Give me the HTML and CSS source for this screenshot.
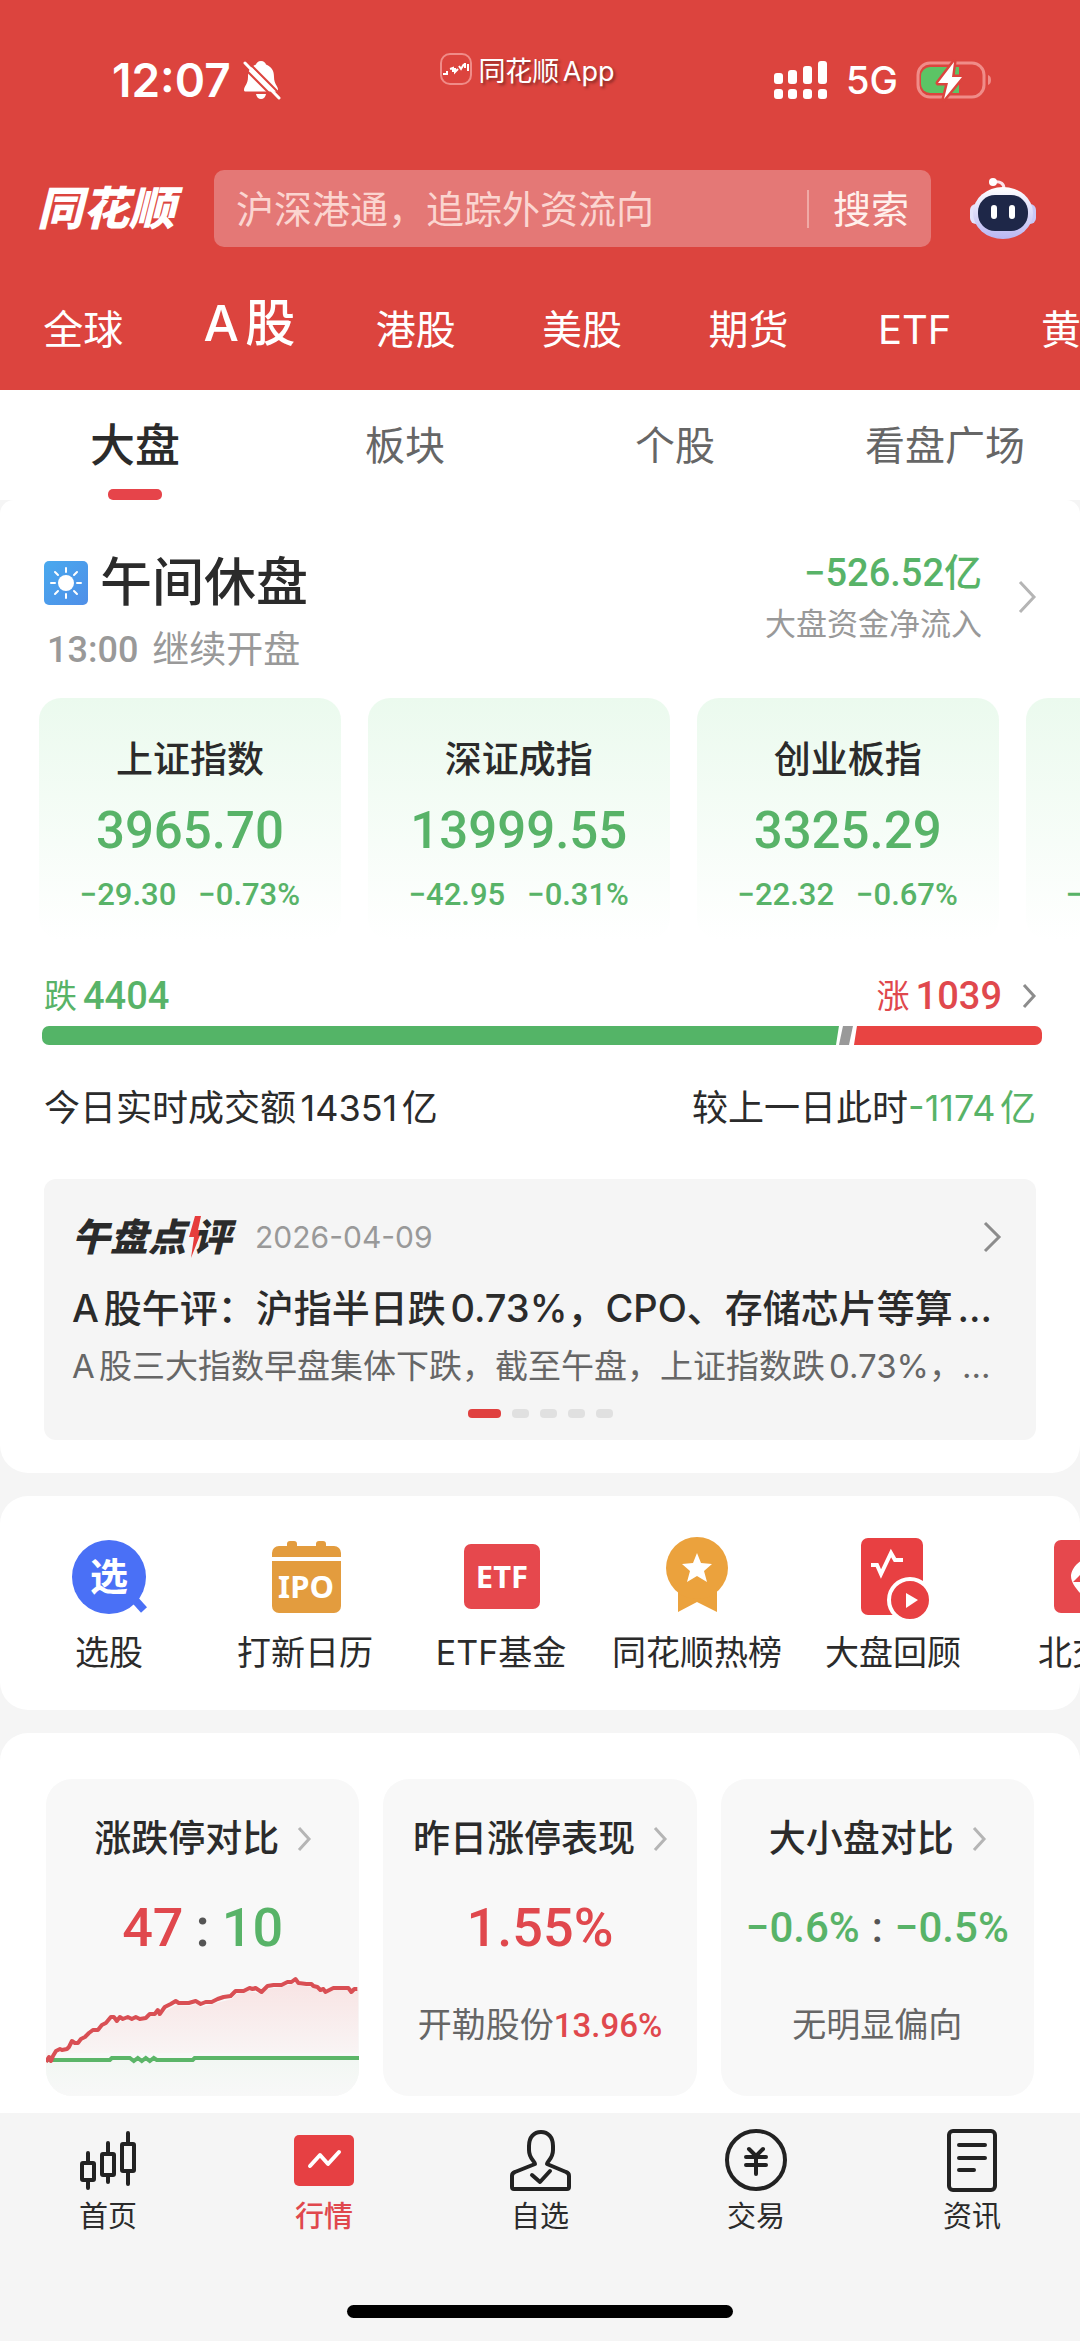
FILE: index.html
```html
<!DOCTYPE html>
<html lang="zh-CN">
<head>
    <meta charset="UTF-8">
    <meta name="viewport" content="width=device-width, initial-scale=1.0">
    <title>同花顺</title>
    <link rel="stylesheet" href="styles.css">
</head>
<body>
<header class="header">
    <div class="status">
        <div class="status-left">
            <span class="time">12:07</span>
            <svg class="bell" viewBox="0 0 38 40" aria-hidden="true">
                <path d="M18 1c-3 0-4.500 2-5 3.500C7 7 5 11 5 17c0 7-4 9-4 13 0 1 .6 1.500 2 1.500h30c1.400 0 2-.5 2-1.500 0-4-4-6-4-13 0-6-2-10-8-12.500C22.500 3 21 1 18 1z" fill="#fff"/>
                <path d="M13 34h10c-.5 3-2.500 5-5 5s-4.500-2-5-5z" fill="#fff"/>
                <path d="M-1 6l35 35" stroke="#dc443e" stroke-width="2"/>
                <path d="M3 0l36 36" stroke="#dc443e" stroke-width="2"/>
                <path d="M2 3l34 35" stroke="#fff" stroke-width="3" stroke-linecap="round"/>
            </svg>
        </div>
        <div class="status-app">
            <svg class="app-icon" viewBox="0 0 32 32" aria-hidden="true">
                <rect x="1" y="1" width="30" height="30" rx="9" fill="none" stroke="#f08c88" stroke-width="2"/>
                <path d="M3 21h4v-3M10 16l3-1v4M15 15v4l3-3M19 13l2 3 3-5M25 10v5M28 11v7" fill="none" stroke="#fff" stroke-width="2"/>
            </svg>
            <span>同花顺App</span>
        </div>
        <div class="status-right">
            <svg class="signal" viewBox="0 0 54 40" fill="#fff" aria-hidden="true">
                <rect x="0" y="13" width="9" height="11" rx="3"/>
                <rect x="14" y="10" width="9" height="14" rx="3"/>
                <rect x="29" y="6" width="9" height="18" rx="3"/>
                <rect x="44" y="1" width="9" height="23" rx="3"/>
                <rect x="0" y="29" width="9" height="10" rx="3"/>
                <rect x="14" y="29" width="9" height="10" rx="3"/>
                <rect x="29" y="29" width="9" height="10" rx="3"/>
                <rect x="44" y="29" width="9" height="10" rx="3"/>
            </svg>
            <span class="net">5G</span>
            <svg class="battery" viewBox="0 0 76 38" aria-hidden="true">
                <rect x="2" y="2" width="66" height="34" rx="12" fill="none" stroke="#f08c88" stroke-width="3"/>
                <path d="M72 14c4 1 4 9 0 10z" fill="#f08c88"/>
                <path d="M14 6h29v26H14a9 9 0 0 1-9-9v-8a9 9 0 0 1 9-9z" fill="#5cc465"/>
                <path d="M38 1L22 22h10l-4 16 18-22H36z" fill="#fff" stroke="#dc443e" stroke-width="5" paint-order="stroke" stroke-linejoin="round"/>
            </svg>
        </div>
    </div>

    <div class="search-row">
        <h1 class="logo">同花顺</h1>
        <form class="search">
            <input class="search-input" type="text" aria-label="搜索" placeholder="沪深港通，追踪外资流向">
            <button class="search-btn" type="button">搜索</button>
        </form>
        <button class="robot" type="button" aria-label="助手">
            <svg viewBox="0 0 66 64" aria-hidden="true">
                <defs>
                    <linearGradient id="shell" x1="0" y1="0" x2="0" y2="1">
                        <stop offset="0" stop-color="#fff"/>
                        <stop offset="1" stop-color="#b9b6f2"/>
                    </linearGradient>
                </defs>
                <path d="M24 5c7-1 10 2 10 7" fill="none" stroke="#fbe3ea" stroke-width="3"/>
                <circle cx="23" cy="5" r="4" fill="#fff"/>
                <rect x="0" y="27" width="12" height="20" rx="6" fill="#e4e3fb"/>
                <rect x="54" y="27" width="12" height="20" rx="6" fill="#c9c9f6"/>
                <ellipse cx="33" cy="36" rx="30" ry="26" fill="url(#shell)"/>
                <rect x="8" y="18" width="50" height="36" rx="17" fill="#1e2748"/>
                <path d="M24 31v8M42 31v8" stroke="#fff" stroke-width="6" stroke-linecap="round"/>
            </svg>
        </button>
    </div>

    <nav class="markets">
        <a href="#">全球</a>
        <a href="#" class="active">A股</a>
        <a href="#">港股</a>
        <a href="#">美股</a>
        <a href="#">期货</a>
        <a href="#">ETF</a>
        <a href="#">黄金</a>
    </nav>
</header>

<nav class="subnav">
    <a href="#" class="active">大盘</a>
    <a href="#">板块</a>
    <a href="#">个股</a>
    <a href="#">看盘广场</a>
</nav>

<main class="main">
    <section class="panel overview">
        <div class="session">
            <div>
                <h2 class="session-title">
                    <svg class="sun" viewBox="0 0 44 44" aria-hidden="true">
                        <defs>
                            <linearGradient id="sky" x1="0" y1="0" x2="1" y2="1">
                                <stop offset="0" stop-color="#49a9ee"/>
                                <stop offset="1" stop-color="#4f8fe8"/>
                            </linearGradient>
                        </defs>
                        <rect width="44" height="44" rx="5" fill="url(#sky)"/>
                        <circle cx="22" cy="22" r="8" fill="#fff"/>
                        <path d="M22 7v4M22 33v4M7 22h4M33 22h4M11 11l3 3M30 30l3 3M33 11l-3 3M14 30l-3 3" stroke="#fff" stroke-width="2" stroke-linecap="round"/>
                    </svg>
                    午间休盘
                </h2>
                <p class="session-next"><span class="num">13:00</span> 继续开盘</p>
            </div>
            <a href="#" class="flow">
                <span class="flow-text">
                    <span class="flow-value down">−526.52亿</span>
                    <span class="flow-label">大盘资金净流入</span>
                </span>
                <svg class="chevron-lg" viewBox="0 0 18 34" aria-hidden="true"><path d="M2 2l14 15L2 32"/></svg>
            </a>
        </div>

        <div class="indexes">
            <a href="#" class="index">
                <span class="index-name">上证指数</span>
                <span class="index-value">3965.70</span>
                <span class="index-change"><span>−29.30</span><span>−0.73%</span></span>
            </a>
            <a href="#" class="index">
                <span class="index-name">深证成指</span>
                <span class="index-value">13999.55</span>
                <span class="index-change"><span>−42.95</span><span>−0.31%</span></span>
            </a>
            <a href="#" class="index">
                <span class="index-name">创业板指</span>
                <span class="index-value">3325.29</span>
                <span class="index-change"><span>−22.32</span><span>−0.67%</span></span>
            </a>
            <div class="index index-next">
                <span class="index-change">−</span>
            </div>
        </div>

        <a href="#" class="breadth">
            <span class="breadth-side down">跌<b>4404</b></span>
            <span class="breadth-side up">涨<b>1039</b>
                <svg class="chevron-sm dark" viewBox="0 0 14 26" aria-hidden="true"><path d="M2 2l10 11L2 24"/></svg>
            </span>
        </a>
        <div class="breadth-bar">
            <span class="bar-down"></span>
            <span class="bar-flat"></span>
            <span class="bar-up"></span>
        </div>
        <div class="turnover">
            <span>今日实时成交额14351亿</span>
            <span>较上一日此时<span class="down">-1174亿</span></span>
        </div>

        <a href="#" class="review">
            <span class="review-head">
                <span class="review-brand">午盘点<svg class="bolt" viewBox="0 0 14 42" aria-hidden="true"><path d="M7 0h6l-3 14h4L3 42l3-21H1z" fill="#e63c3c"/></svg>评</span>
                <time class="review-date">2026-04-09</time>
                <svg class="chevron-md" viewBox="0 0 18 32" aria-hidden="true"><path d="M2 2l14 14L2 30"/></svg>
            </span>
            <span class="review-title">A股午评：沪指半日跌0.73%，CPO、存储芯片等算...</span>
            <span class="review-text">A股三大指数早盘集体下跌，截至午盘，上证指数跌0.73%，...</span>
            <span class="dots"><i class="on"></i><i></i><i></i><i></i><i></i></span>
        </a>
    </section>

    <section class="panel shortcuts">
        <a href="#">
            <svg viewBox="0 0 80 80" aria-hidden="true">
                <path d="M66 65l9 10" stroke="#4a70f6" stroke-width="8"/>
                <circle cx="40" cy="42" r="37" fill="#4a70f6"/>
                <text class="icon-text-cjk" x="40" y="55">选</text>
            </svg>
            选股
        </a>
        <a href="#">
            <svg viewBox="0 0 80 80" aria-hidden="true">
                <path d="M7 22v-4a7 7 0 0 1 7-7h8V9a3 3 0 0 1 3-3h4a3 3 0 0 1 3 3v2h19V9a3 3 0 0 1 3-3h4a3 3 0 0 1 3 3v2h8a7 7 0 0 1 7 7v4z" fill="#e39c3e"/>
                <path d="M7 26h69v45a7 7 0 0 1-7 7H14a7 7 0 0 1-7-7z" fill="#e39c3e"/>
                <text class="icon-text" x="41" y="63">IPO</text>
            </svg>
            打新日历
        </a>
        <a href="#">
            <svg viewBox="0 0 80 80" aria-hidden="true">
                <rect x="3" y="9" width="76" height="65" rx="7" fill="#e6484d"/>
                <text class="icon-text" x="41" y="53">ETF</text>
            </svg>
            ETF基金
        </a>
        <a href="#">
            <svg viewBox="0 0 80 80" aria-hidden="true">
                <path d="M21 52h39v25l-20-10-19 10z" fill="#eba23d"/>
                <circle cx="40" cy="33" r="31" fill="#eba23d"/>
                <path d="M40 18l4 10 11 1-8 7 3 11-10-6-10 6 3-11-8-7 11-1z" fill="#fff"/>
            </svg>
            同花顺热榜
        </a>
        <a href="#">
            <svg viewBox="0 0 80 80" aria-hidden="true">
                <rect x="8" y="3" width="62" height="77" rx="7" fill="#e84042"/>
                <path d="M18 30h6l4 9 10-21 4 7h8" fill="none" stroke="#fff" stroke-width="4"/>
                <circle cx="57" cy="65" r="21" fill="#e84042" stroke="#fff" stroke-width="4"/>
                <path d="M53 58l12 7-12 8z" fill="#fff"/>
            </svg>
            大盘回顾
        </a>
        <a href="#">
            <svg viewBox="0 0 80 80" aria-hidden="true">
                <rect x="5" y="5" width="72" height="73" rx="7" fill="#e6484d"/>
                <path d="M40 23c-8 0-18 10-18 18 0 7 6 14 12 20l-2-14h-8l8-8z" fill="#fff"/>
            </svg>
            北交所
        </a>
    </section>

    <section class="panel stats">
        <a href="#" class="stat">
            <span class="stat-title">涨跌停对比<svg class="chevron-sm" viewBox="0 0 14 26" aria-hidden="true"><path d="M2 2l10 11L2 24"/></svg></span>
            <span class="stat-value big"><span class="up">47</span><span class="colon">:</span><span class="down">10</span></span>
            <svg class="stat-chart" viewBox="0 0 314 116" preserveAspectRatio="none" aria-hidden="true">
                <defs>
                    <linearGradient id="rise" x1="0" y1="0" x2="0" y2="1">
                        <stop offset="0" stop-color="#f8e4e4"/>
                        <stop offset="1" stop-color="#f9f6f6"/>
                    </linearGradient>
                    <linearGradient id="fall" x1="0" y1="0" x2="0" y2="1">
                        <stop offset="0" stop-color="#f2f7f3"/>
                        <stop offset="1" stop-color="#f8f8f8"/>
                    </linearGradient>
                </defs>
                <path d="M0 80l7-4 7-6 7 0 5-7 6 1 7-6 8-6 9-3 9-9 7 2 12-2h15l7-4 9-2 6-4 10-5 13 1 7-2 5 3 11-3 19-5 5-5 13-3 12 3 6-5 14-2 14-4 5 3 12 1 15 5 8-3 14-1 9 2v63H0z" fill="url(#rise)"/>
                <path d="M0 80h314v36H0z" fill="url(#fall)"/>
                <path d="M0 80h64l2-2h18l4 3 4-3 4 3 4-3 4 3 4-3 3 2h36l2-2h165" fill="none" stroke="#5bb568" stroke-width="4"/>
                <path d="M0 82l3-5 2 4 2-5 3-5 4-2 2 1 5-1 2-2 3-6 3 2 3 0 3-4 4-2 4-4 4-3 5 0 4-5 4-2 5-6 3 0 3 4 3-4 3 2 5-2 4 2 4-2 4 2 6-1 4-4 5 0 3-4 2 4 5-7 6-3 5-3 3 2 10 0 7-2 5 3 5-2 6 0 6-3 6-2 7-1 5-5 8 0 6-3 3 1 3-1 6 4 6-6 6-1 8 0 6-3 4 0 4-3 3 4 8 1 5 0 2 2 4 1 3 3 3-1 2 3 8-4h15l3 4 3-3h3" fill="none" stroke="#d94f54" stroke-width="4" stroke-linejoin="round"/>
            </svg>
        </a>
        <a href="#" class="stat">
            <span class="stat-title">昨日涨停表现<svg class="chevron-sm" viewBox="0 0 14 26" aria-hidden="true"><path d="M2 2l10 11L2 24"/></svg></span>
            <span class="stat-value big up">1.55%</span>
            <span class="stat-note">开勒股份<span class="num up">13.96%</span></span>
        </a>
        <a href="#" class="stat">
            <span class="stat-title">大小盘对比<svg class="chevron-sm" viewBox="0 0 14 26" aria-hidden="true"><path d="M2 2l10 11L2 24"/></svg></span>
            <span class="stat-value down">−0.6%<span class="colon">:</span>−0.5%</span>
            <span class="stat-note">无明显偏向</span>
        </a>
    </section>
</main>

<footer class="tabbar">
    <nav class="tabs">
        <a href="#">
            <svg viewBox="0 0 64 64" aria-hidden="true">
                <path d="M12 25v9M12 53v7M32 15v10M32 47v7M52 5v10M52 44v12"/>
                <rect x="6" y="35" width="12" height="17" rx="1"/>
                <rect x="26" y="26" width="12" height="21" rx="1"/>
                <rect x="46" y="16" width="12" height="27" rx="1"/>
            </svg>
            首页
        </a>
        <a href="#" class="active">
            <svg viewBox="0 0 64 64" aria-hidden="true">
                <rect class="tab-fill" x="2" y="7" width="60" height="51" rx="5"/>
                <path class="tab-line" d="M18 38l10-11 8 9 11-12"/>
            </svg>
            行情
        </a>
        <a href="#">
            <svg viewBox="0 0 64 64" aria-hidden="true">
                <path d="M4 59V48q0-3 3-4l20-8c0-3-6-5-6-14v-4C21 9 26 4 33 4s12 5 12 14v4c0 9-6 11-6 14l19 8q3 1 3 4v11q0 2-2 2H6q-2 0-2-2z"/>
                <path d="M24 47l8 7 10-11"/>
            </svg>
            自选
        </a>
        <a href="#">
            <svg viewBox="0 0 64 64" aria-hidden="true">
                <circle cx="32" cy="32" r="29"/>
                <path d="M25 21l7 7 7-7M22 29h20M22 37h20M32 28v18"/>
            </svg>
            交易
        </a>
        <a href="#">
            <svg viewBox="0 0 64 64" aria-hidden="true">
                <rect x="9" y="3" width="46" height="59" rx="4"/>
                <path d="M19 17h26M19 30h26M19 42h15"/>
            </svg>
            资讯
        </a>
    </nav>
    <div class="home-bar"></div>
</footer>
</body>
</html>
```
FILE: styles.css
```css
* {
    box-sizing: border-box;
}

body {
    margin: 0;
    min-height: 100vh;
    display: flex;
    flex-direction: column;
    font-family: Inter, "Noto Sans CJK SC", sans-serif;
    color: #2b2b2b;
    background: #f5f5f5;
    overflow-x: hidden;
}

h1, h2, p {
    margin: 0;
}

a {
    color: inherit;
    text-decoration: none;
}

button {
    border: none;
    padding: 0;
    background: none;
    font-family: inherit;
    cursor: pointer;
}

svg {
    display: block;
    flex: none;
    overflow: visible;
}

.up {
    color: #e0484d;
}

.down {
    color: #58b368;
}

.num {
    font-family: Roboto, "Noto Sans CJK SC", sans-serif;
    font-weight: 500;
}

/* Header */
.header {
    background: #dc443e;
    color: #fff;
    overflow: hidden;
}

.status {
    display: flex;
    justify-content: space-between;
    align-items: center;
    padding: 52px 88px 62px 112px;
}

.status-left,
.status-right,
.status-app {
    display: flex;
    align-items: center;
}

.status-left {
    gap: 12px;
    height: 56px;
}

.time {
    font-size: 46px;
    font-weight: 600;
}

.bell {
    width: 38px;
    height: 40px;
}

.status-app {
    align-self: flex-start;
    gap: 6px;
    height: 34px;
    font-size: 27px;
    text-autospace: normal;
    text-shadow: 2px 2px 3px rgba(0, 0, 0, 0.4);
}

.app-icon {
    width: 32px;
    height: 32px;
}

.status-right {
    gap: 18px;
}

.signal {
    width: 54px;
    height: 40px;
}

.net {
    font-size: 38px;
    font-weight: 500;
}

.battery {
    width: 76px;
    height: 38px;
}

.search-row {
    display: flex;
    align-items: center;
    gap: 39px;
    padding: 0 44px 0 37px;
}

.logo {
    font-size: 46px;
    line-height: 77px;
    font-weight: 900;
    font-style: italic;
}

.search {
    flex: 1;
    min-width: 0;
    display: flex;
    align-items: center;
    height: 77px;
    padding: 0 22px;
    border-radius: 10px;
    background: #e47876;
}

.search-input {
    flex: 1;
    min-width: 0;
    border: none;
    padding: 0;
    background: none;
    outline: none;
    color: #fff;
    font-family: inherit;
    font-size: 38px;
}

.search-input::placeholder {
    color: #fbd5d0;
    opacity: 1;
}

.search-btn {
    height: 38px;
    padding-left: 24px;
    border-left: 2px solid #f0aaa6;
    color: #fff0ec;
    font-size: 38px;
    line-height: 38px;
}

.robot svg {
    width: 66px;
    height: 64px;
}

.markets {
    display: flex;
    align-items: center;
    height: 143px;
    padding-top: 23px;
}

.markets a {
    flex: 0 0 15.4%;
    text-align: center;
    font-size: 40px;
    line-height: 60px;
}

.markets .active {
    padding-bottom: 14px;
    font-size: 50px;
    font-weight: 500;
    text-autospace: normal;
}

/* Sub navigation */
.subnav {
    display: grid;
    grid-template-columns: repeat(4, 1fr);
    background: #fff;
}

.subnav a {
    display: flex;
    flex-direction: column;
    align-items: center;
    height: 110px;
    padding-top: 26px;
    font-size: 40px;
    line-height: 60px;
    color: #666;
}

.subnav .active {
    font-size: 45px;
    font-weight: 500;
    color: #2b2b2b;
}

.subnav .active::after {
    content: "";
    width: 54px;
    height: 11px;
    margin-top: 13px;
    border-radius: 5px;
    background: #e6444a;
}

/* Panels */
.main {
    display: flex;
    flex-direction: column;
    gap: 23px;
}

.panel {
    background: #fff;
    border-radius: 28px;
    overflow: hidden;
}

.overview {
    padding: 50px 44px 33px;
    border-radius: 14px 14px 28px 28px;
}

.session {
    display: flex;
    justify-content: space-between;
    align-items: flex-start;
}

.session-title {
    display: flex;
    align-items: center;
    gap: 12px;
    font-size: 52px;
    line-height: 66px;
    font-weight: 500;
}

.sun {
    width: 44px;
    height: 44px;
}

.session-next {
    display: flex;
    align-items: center;
    gap: 14px;
    margin-top: 9px;
    padding-left: 3px;
    font-size: 37px;
    line-height: 50px;
    color: #999;
}

.session-next .num {
    font-size: 36px;
}

.flow {
    display: flex;
    align-items: center;
    gap: 36px;
    height: 94px;
}

.flow-text {
    display: flex;
    flex-direction: column;
    align-items: flex-end;
    gap: 8px;
}

.flow-value {
    font-family: Roboto, "Noto Sans CJK SC", sans-serif;
    font-size: 38px;
    line-height: 46px;
    font-weight: 500;
}

.flow-label {
    font-size: 31px;
    line-height: 40px;
    color: #999;
}

.chevron-lg path,
.chevron-md path,
.chevron-sm path {
    fill: none;
    stroke: #b5b5b5;
    stroke-width: 3;
}

.chevron-lg {
    width: 18px;
    height: 34px;
}

.chevron-md {
    width: 18px;
    height: 32px;
}

.chevron-sm {
    width: 14px;
    height: 26px;
}

.chevron-md path,
.dark path {
    stroke: #8c8c8c;
}

.indexes {
    display: flex;
    gap: 28px;
    margin: 23px -44px 0 -5px;
    overflow: hidden;
}

.index {
    flex: 0 0 29%;
    display: flex;
    flex-direction: column;
    align-items: center;
    height: 242px;
    padding-top: 38px;
    border-radius: 22px;
    background: linear-gradient(#ebfaee, #fff);
    color: #58b368;
    font-family: Roboto, "Noto Sans CJK SC", sans-serif;
    font-weight: 500;
}

.index-name {
    font-size: 37px;
    line-height: 50px;
    color: #2b2b2b;
}

.index-value {
    margin-top: 15px;
    font-size: 51px;
    line-height: 60px;
}

.index-change {
    display: flex;
    gap: 22px;
    margin-top: 14px;
    font-size: 31px;
    line-height: 40px;
}

.index-next {
    align-items: flex-start;
    justify-content: flex-end;
    padding: 0 0 25px 40px;
}

/* four cards in a row, the last one runs off the edge */
.indexes {
    gap: 27px;
}

.breadth {
    display: flex;
    justify-content: space-between;
    margin-top: 31px;
    font-size: 33px;
    line-height: 50px;
}

.breadth-side {
    display: flex;
    align-items: center;
    gap: 6px;
}

.breadth-side b {
    font-family: Roboto, sans-serif;
    font-size: 38px;
    font-weight: 500;
}

.breadth-side svg {
    margin-left: 14px;
}

.breadth-bar {
    display: flex;
    height: 19px;
    margin: 5px -6px 0 -2px;
    border-radius: 7px;
    overflow: hidden;
}

.bar-down {
    flex: 4404;
    background: #54b467;
    clip-path: polygon(0 0, 100% 0, calc(100% - 3px) 100%, 0 100%);
}

.bar-flat {
    width: 14px;
    background: #999;
    clip-path: polygon(4px 0, 100% 0, calc(100% - 4px) 100%, 0 100%);
}

.bar-up {
    flex: 1039;
    margin-left: 1px;
    background: #e84442;
    clip-path: polygon(3px 0, 100% 0, 100% 100%, 0 100%);
}

.turnover {
    display: flex;
    justify-content: space-between;
    margin-top: 38px;
    font-size: 36px;
    line-height: 50px;
    text-autospace: normal;
}

.review {
    display: flex;
    flex-direction: column;
    margin-top: 46px;
    padding: 33px 28px 22px;
    border-radius: 12px;
    background: #f5f5f5;
}

.review-head {
    display: flex;
    align-items: center;
    gap: 24px;
    padding-right: 7px;
    line-height: 50px;
}

.review-brand {
    display: flex;
    align-items: center;
    font-size: 38px;
    font-weight: 900;
    font-style: italic;
}

.bolt {
    width: 14px;
    height: 42px;
    margin: 0 -9px 0 2px;
}

.review-date {
    flex: 1;
    font-size: 30px;
    color: #999;
}

.review-title,
.review-text {
    white-space: nowrap;
    text-autospace: normal;
}

.review-title {
    margin-top: 21px;
    font-size: 38px;
    line-height: 50px;
    font-weight: 500;
}

.review-text {
    margin-top: 11px;
    font-size: 33px;
    line-height: 44px;
    color: #666;
}

.dots {
    display: flex;
    justify-content: center;
    gap: 11px;
    margin-top: 21px;
}

.dots i {
    width: 17px;
    height: 9px;
    border-radius: 4px;
    background: #e0e0e0;
}

.dots .on {
    width: 33px;
    background: #e0403f;
}

/* Shortcuts */
.shortcuts {
    display: flex;
    padding: 39px 0 35px 11px;
}

.shortcuts a {
    flex: 0 0 196px;
    display: flex;
    flex-direction: column;
    align-items: center;
    gap: 16px;
    font-size: 34px;
    line-height: 44px;
    white-space: nowrap;
}

.shortcuts svg {
    width: 80px;
    height: 80px;
}

.icon-text,
.icon-text-cjk {
    fill: #fff;
    font-weight: 700;
    text-anchor: middle;
}

.icon-text {
    font-family: "Noto Sans", sans-serif;
    font-size: 31px;
}

.icon-text-cjk {
    font-size: 38px;
}

/* Stats */
.stats {
    display: grid;
    grid-template-columns: repeat(3, 1fr);
    gap: 24px;
    padding: 46px 46px 17px;
    border-radius: 28px 28px 0 0;
}

.stat {
    display: flex;
    flex-direction: column;
    align-items: center;
    height: 317px;
    padding-top: 35px;
    border-radius: 26px;
    background: #f8f8f8;
    overflow: hidden;
}

.stat-title {
    display: flex;
    align-items: center;
    gap: 18px;
    font-size: 37px;
    line-height: 50px;
    font-weight: 500;
    white-space: nowrap;
}

.stat-value {
    display: flex;
    align-items: center;
    margin-top: 34px;
    font-family: Roboto, sans-serif;
    font-size: 42px;
    line-height: 60px;
    font-weight: 500;
}

.stat-value.big {
    font-size: 54px;
}

.colon {
    padding: 0 12px;
    color: #555;
}

.stat-note {
    margin-top: 45px;
    font-size: 34px;
    line-height: 44px;
    color: #666;
}

.stat-note .num {
    font-size: 33px;
}

.stat-chart {
    width: 100%;
    height: 116px;
    margin-top: auto;
}

/* Bottom tab bar */
.tabbar {
    margin-top: auto;
    padding: 15px 0 23px;
    background: #f5f5f5;
}

.tabs {
    display: grid;
    grid-template-columns: repeat(5, 1fr);
}

.tabs a {
    display: flex;
    flex-direction: column;
    align-items: center;
    gap: 7px;
    font-size: 29px;
    line-height: 36px;
}

.tabs svg {
    width: 64px;
    height: 64px;
    fill: none;
    stroke: #222;
    stroke-width: 4;
    stroke-linecap: round;
    stroke-linejoin: round;
}

.tabs .active {
    color: #e0484d;
    font-weight: 500;
}

.tabs .tab-fill {
    fill: #e64043;
    stroke: none;
}

.tabs .tab-line {
    stroke: #fff;
}

.home-bar {
    width: 386px;
    height: 13px;
    margin: 70px auto 0;
    border-radius: 7px;
    background: #000;
}
```
